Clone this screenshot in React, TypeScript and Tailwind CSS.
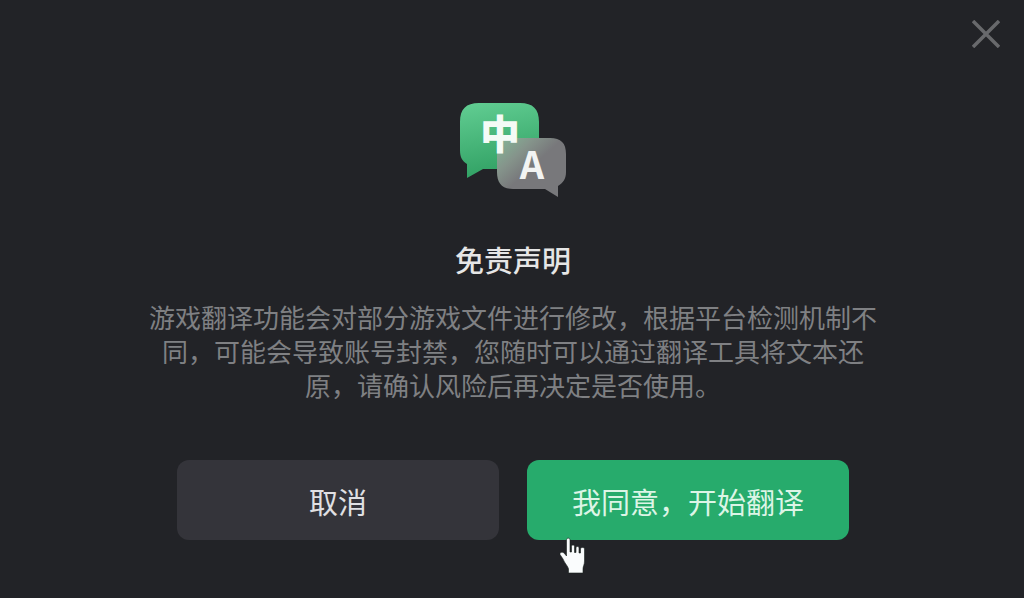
import React from 'react';

const TranslateLogo: React.FC = () => (
  <svg width="108" height="96" viewBox="0 0 108 96" aria-hidden="true">
    <defs>
      <linearGradient id="bubbleGreen" x1="0.3" y1="0" x2="0.5" y2="1">
        <stop offset="0" stopColor="#5fcb90" />
        <stop offset="1" stopColor="#2f9f62" />
      </linearGradient>
      <linearGradient id="bubbleGray" x1="0" y1="0" x2="0.65" y2="0.6">
        <stop offset="0" stopColor="#82b997" />
        <stop offset="0.45" stopColor="#85948b" />
        <stop offset="0.8" stopColor="#78787b" />
      </linearGradient>
    </defs>
    <path
      d="M20 1H61C74 1 80 7 80 20V48C80 61 74 67 61 67H24L8 76C8 76 8 69 8 62C3 59 1 55 1 48V20C1 7 7 1 20 1Z"
      fill="url(#bubbleGreen)"
    />
    <path
      d="M54 36H91C102 36 107 41 107 52V70C107 77 104 81 99 84V95L86 87H54C43 87 38 81 38 70V52C38 41 43 36 54 36Z"
      fill="url(#bubbleGray)"
    />
    <text
      x="41"
      y="47"
      textAnchor="middle"
      fill="#f4fbf6"
      className="font-['Noto_Sans_CJK_SC',sans-serif] text-[40px] font-black"
    >
      中
    </text>
    <text
      x="73"
      y="77"
      textAnchor="middle"
      fill="#f2f4f3"
      className="font-['Noto_Sans_CJK_SC',sans-serif] text-[38px] font-bold"
    >
      A
    </text>
  </svg>
);

const HandCursor: React.FC = () => (
  <svg
    width="28"
    height="38"
    viewBox="0 0 28 38"
    aria-hidden="true"
    className="pointer-events-none absolute top-[77px] left-8"
  >
    <path
      d="M7.5 3C7.5 0.5 11 0.5 11 3V15H12.5V9.5C12.5 7.5 15.5 7.5 15.5 9.5V15.5H17V11C17 9 20 9 20 11V16H21.5V12C21.5 10 25.5 10 25.5 12V24C25.5 28 24 29 24 32V36H9.5V32C9.5 30 5.5 26 4 22L1 17.5C0.5 15 3.5 14.5 5 16L7.5 19Z"
      fill="#fafcfd"
      stroke="#1b2420"
      strokeWidth="0.6"
    />
  </svg>
);

const App: React.FC = () => {
  return (
    <div
      role="dialog"
      aria-labelledby="title"
      className="flex min-h-screen flex-col bg-[#222327] font-['Noto_Sans_CJK_SC',sans-serif]"
    >
      <header className="flex justify-end px-6 pt-5">
        <button type="button" aria-label="关闭" className="text-[#68696c]">
          <svg width="28" height="28" viewBox="0 0 28 28" fill="none" stroke="currentColor" strokeWidth="3.5">
            <path d="M1 1L27 27M27 1L1 27" />
          </svg>
        </button>
      </header>

      <main className="flex flex-col items-center pt-[54px] pr-10 pb-14 pl-[42px]">
        <TranslateLogo />
        <h1 id="title" className="mt-[43px] text-[29px] leading-9 font-medium text-[#e6e6e6]">
          免责声明
        </h1>
        <p className="mt-[23px] max-w-[730px] text-center text-[26px] leading-[34px] text-[#7f8083]">
          游戏翻译功能会对部分游戏文件进行修改，根据平台检测机制不同，可能会导致账号封禁，您随时可以通过翻译工具将文本还原，请确认风险后再决定是否使用。
        </p>
        <div className="mt-[58px] grid w-full max-w-[672px] grid-cols-2 gap-7 text-[29px]">
          <button type="button" className="h-20 rounded-xl bg-[#34343a] pt-1 text-[#e0e0e3]">
            取消
          </button>
          <div className="relative">
            <button type="button" className="h-20 w-full rounded-xl bg-[#27ab6c] pt-1 text-[#dcf5e6]">
              我同意，开始翻译
            </button>
            <HandCursor />
          </div>
        </div>
      </main>
    </div>
  );
};

export default App;
